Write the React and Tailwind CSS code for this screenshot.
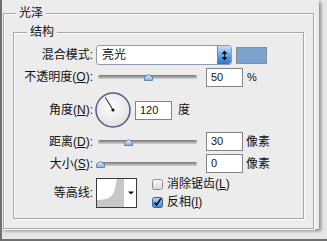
import React from 'react';

const Mn = ({ k }) => (
  <span>
    (<u>{k}</u>)
  </span>
);

const Label = ({ children }) => (
  <div className="w-[79px] shrink-0 text-right text-[12px] leading-[14px] text-[#111]">{children}</div>
);

const Thumb = () => (
  <svg width="9" height="7" viewBox="0 0 9 7">
    <defs>
      <linearGradient id="tg" x1="0" y1="0" x2="0" y2="1">
        <stop offset="0" stopColor="#eef5fd" />
        <stop offset="1" stopColor="#7fa9dc" />
      </linearGradient>
    </defs>
    <path d="M4.5 0.5 L8.5 3 L8.5 6.5 L0.5 6.5 L0.5 3 Z" fill="url(#tg)" stroke="#6384b4" strokeWidth="1" strokeLinejoin="round" />
  </svg>
);

const Slider = ({ pos }) => (
  <div className="relative ml-[5px] flex h-[8px] w-[99px] items-center">
    <div className="h-[4px] w-full rounded-full bg-gradient-to-b from-[#747474] to-[#d6d6d6]" />
    <div className={`absolute top-[1px] ${pos}`}>
      <Thumb />
    </div>
  </div>
);

const Field = ({ value, className = '' }) => (
  <div className={`flex h-[19px] w-[37px] shrink-0 items-center border border-[#848484] bg-white pl-[4px] font-['Liberation_Sans',sans-serif] text-[11px] text-[#111] ${className}`}>
    {value}
  </div>
);

const Dial = () => (
  <svg width="36" height="36" viewBox="0 0 36 36" className="ml-[2px] shrink-0">
    <defs>
      <radialGradient id="dg" cx="45%" cy="40%" r="65%">
        <stop offset="0" stopColor="#ffffff" />
        <stop offset="1" stopColor="#dedede" />
      </radialGradient>
    </defs>
    <circle cx="18" cy="18" r="17" fill="url(#dg)" stroke="#4f5f88" strokeWidth="1.5" />
    <line x1="18" y1="18" x2="10.4" y2="5.5" stroke="#111" strokeWidth="1" />
    <circle cx="18" cy="18" r="1.6" fill="#111" />
  </svg>
);

const Contour = () => (
  <svg width="41" height="30" viewBox="0 0 41 30" className="ml-[3px] shrink-0">
    <rect x="0.5" y="0.5" width="40" height="29" fill="#fff" stroke="#3a3a3a" />
    <path d="M1 29 L1 22 C9 22 15 20 17.5 15 C19 11 20 5 21 1 L28 1 L28 29 Z" fill="#c8c8c8" />
    <path d="M32 13.5 L38 13.5 L35 16.5 Z" fill="#111" />
  </svg>
);

const Check = ({ on }) =>
  on ? (
    <svg width="11" height="11" viewBox="0 0 11 11" className="shrink-0">
      <defs>
        <linearGradient id="cb" x1="0" y1="0" x2="0" y2="1">
          <stop offset="0" stopColor="#b9d8f7" />
          <stop offset="1" stopColor="#3d84d6" />
        </linearGradient>
      </defs>
      <rect x="0.5" y="0.5" width="10" height="10" rx="2" fill="url(#cb)" stroke="#35609a" />
      <path d="M2.5 5.5 L4.5 8 L9 1.5" fill="none" stroke="#0b0b0b" strokeWidth="1.6" />
    </svg>
  ) : (
    <svg width="11" height="11" viewBox="0 0 11 11" className="shrink-0">
      <defs>
        <linearGradient id="cu" x1="0" y1="0" x2="0" y2="1">
          <stop offset="0" stopColor="#fbfbfb" />
          <stop offset="1" stopColor="#d8d8d8" />
        </linearGradient>
      </defs>
      <rect x="0.5" y="0.5" width="10" height="10" rx="2" fill="url(#cu)" stroke="#8e8e8e" />
    </svg>
  );

export default function App() {
  return (
    <div className="h-[241px] w-[327px] overflow-hidden border-b-2 border-l-2 border-[#707070] bg-[#e6e6e6] font-['Liberation_Sans','Noto_Sans_CJK_SC',sans-serif] text-[#111]">
      <div className="h-[229px] w-[317px] bg-[#ececec] pl-[1px] pt-[13px] shadow-[2px_2px_3px_rgba(0,0,0,0.4)]">
        <div className="relative h-[216px] w-[311px] border border-[#a8a8a8] pl-[9px] pt-[18px] shadow-[inset_1px_1px_0_#fff,1px_1px_0_#fff]">
          <span className="absolute left-[12px] top-[-9px] bg-[#ececec] px-[3px] text-[12px] leading-[16px]">光泽</span>

          <div className="relative h-[187px] w-[291px] border border-[#a8a8a8] pt-[12px] shadow-[inset_1px_1px_0_#fff,1px_1px_0_#fff]">
            <span className="absolute left-[13px] top-[-9px] bg-[#ececec] px-[3px] text-[12px] leading-[16px]">结构</span>

            <div className="flex h-[20px] items-center">
              <Label>混合模式:</Label>
              <div className="ml-[3px] flex h-[20px] w-[136px] items-center rounded-[3px] border border-[#8d9cb0] bg-white">
                <span className="flex-1 pl-[5px] text-[12px] leading-[14px]">亮光</span>
                <div className="flex h-[18px] w-[14px] items-center justify-center rounded-r-[3px] border-l border-[#5a86c0] bg-gradient-to-b from-[#c4e0fb] via-[#6aa6ea] to-[#2f72cc]">
                  <svg width="7" height="11" viewBox="0 0 7 11">
                    <path d="M3.5 0.5 L6.5 4 L0.5 4 Z" fill="#111" />
                    <rect x="3" y="4" width="1" height="3" fill="#111" />
                    <path d="M0.5 7 L6.5 7 L3.5 10.5 Z" fill="#111" />
                  </svg>
                </div>
              </div>
              <div className="ml-[4px] h-[17px] w-[31px] border border-[#8c8c8c] bg-[#7ba3cf]" />
            </div>

            <div className="mt-[2px] flex h-[20px] items-center">
              <Label>
                不透明度<Mn k="O" />:
              </Label>
              <Slider pos="left-[46px]" />
              <Field value="50" className="ml-[9px]" />
              <span className="ml-[4px] text-[11px]">%</span>
            </div>

            <div className="mt-[5px] flex h-[36px] items-center">
              <Label>
                角度<Mn k="N" />:
              </Label>
              <Dial />
              <Field value="120" className="ml-[4px]" />
              <span className="ml-[6px] text-[12px] leading-[14px]">度</span>
            </div>

            <div className="mt-[4px] flex h-[19px] items-center">
              <Label>
                距离<Mn k="D" />:
              </Label>
              <Slider pos="left-[26px]" />
              <Field value="30" className="ml-[9px]" />
              <span className="ml-[3px] text-[12px] leading-[14px]">像素</span>
            </div>

            <div className="mt-[3px] flex h-[19px] items-center">
              <Label>
                大小<Mn k="S" />:
              </Label>
              <Slider pos="left-[-2px]" />
              <Field value="0" className="ml-[9px]" />
              <span className="ml-[3px] text-[12px] leading-[14px]">像素</span>
            </div>

            <div className="mt-[5px] flex h-[30px] items-center">
              <Label>等高线:</Label>
              <Contour />
              <div className="ml-[15px] flex flex-col gap-[4px]">
                <div className="flex items-center gap-[4px] text-[12px] leading-[14px]">
                  <Check on={false} />
                  <span>
                    消除锯齿<Mn k="L" />
                  </span>
                </div>
                <div className="flex items-center gap-[4px] text-[12px] leading-[14px]">
                  <Check on />
                  <span>
                    反相<Mn k="I" />
                  </span>
                </div>
              </div>
            </div>
          </div>
        </div>
      </div>
    </div>
  );
}
